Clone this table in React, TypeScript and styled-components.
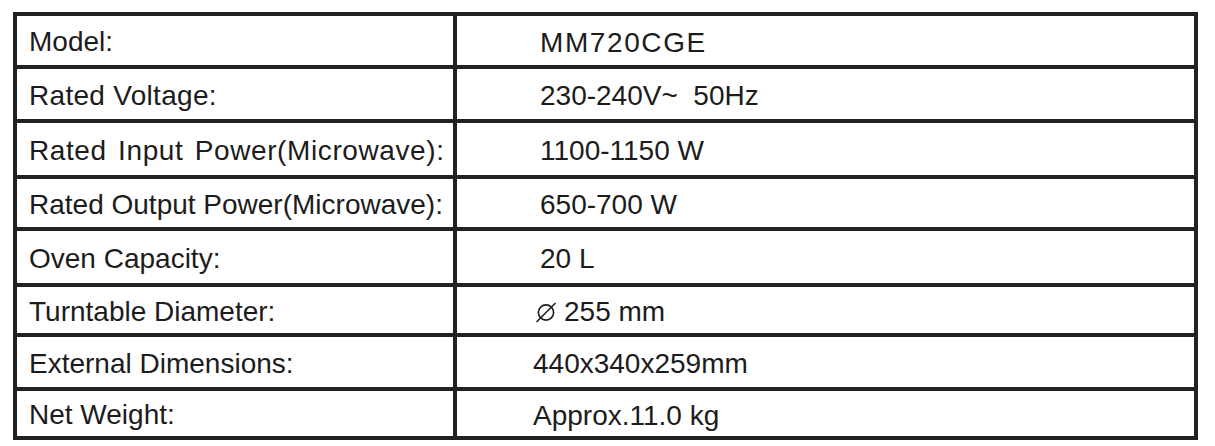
import styled, { createGlobalStyle } from "styled-components";

const GlobalStyle = createGlobalStyle`
  body {
    margin: 0;
    background: #ffffff;
    font-family: "Liberation Sans", Arial, sans-serif;
    color: #1c1c1c;
  }
`;

type Spec = {
  label: string;
  value: string;
  tight?: number;
  words?: number;
  spread?: number;
  shift?: number;
  diameter?: boolean;
};

const specs: Spec[] = [
  { label: "Model:", value: "MM720CGE", spread: 1.6 },
  { label: "Rated Voltage:", value: "230-240V~  50Hz", tight: 0.3 },
  { label: "Rated Input Power(Microwave):", value: "1100-1150 W", tight: 0.6, words: 3 },
  { label: "Rated Output Power(Microwave):", value: "650-700 W" },
  { label: "Oven Capacity:", value: "20 L" },
  { label: "Turntable Diameter:", value: "255 mm", shift: 78, diameter: true },
  { label: "External Dimensions:", value: "440x340x259mm", shift: 76 },
  { label: "Net Weight:", value: "Approx.11.0 kg", shift: 76 },
];

const Sheet = styled.div`
  padding: 12px 0 0 13px;
  width: 1215px;
  height: 446px;
  box-sizing: border-box;
`;

const SpecTable = styled.div`
  display: grid;
  grid-template-columns: 436px 737px;
  grid-template-rows: 49px 50px 52px 48px 52px 46px 50px 45px;
  gap: 4px;
  width: 1185px;
  box-sizing: border-box;
  border: 4px solid #222222;
  background: #222222;
`;

const Cell = styled.div`
  display: flex;
  align-items: center;
  background: #ffffff;
  white-space: pre;
`;

const Label = styled(Cell)<{ $tight?: number; $words?: number }>`
  padding: 3px 0 0 12px;
  font-size: 28px;
  letter-spacing: ${(p) => p.$tight ?? 0}px;
  word-spacing: ${(p) => p.$words ?? 0}px;
`;

const Value = styled(Cell)<{ $shift?: number; $spread?: number }>`
  padding: 4px 0 0 ${(p) => p.$shift ?? 83}px;
  font-size: 28px;
  letter-spacing: ${(p) => p.$spread ?? 0}px;
`;

const DiameterIcon = styled.svg`
  width: 22px;
  height: 21px;
  margin-right: 7px;
  flex-shrink: 0;
`;

const Diameter = () => (
  <DiameterIcon viewBox="0 0 22 21">
    <circle cx="11" cy="10.5" r="7.6" fill="none" stroke="#1c1c1c" strokeWidth="1.6" />
    <line x1="1.5" y1="20" x2="20.5" y2="1" stroke="#1c1c1c" strokeWidth="1.6" />
  </DiameterIcon>
);

const App = () => {
  return (
    <>
      <GlobalStyle />
      <Sheet>
        <SpecTable>
          {specs.map((s) => [
            <Label key={s.label} $tight={s.tight} $words={s.words}>
              {s.label}
            </Label>,
            <Value key={s.value} $shift={s.shift} $spread={s.spread}>
              {s.diameter && <Diameter />}
              {s.value}
            </Value>,
          ])}
        </SpecTable>
      </Sheet>
    </>
  );
};

export default App;
